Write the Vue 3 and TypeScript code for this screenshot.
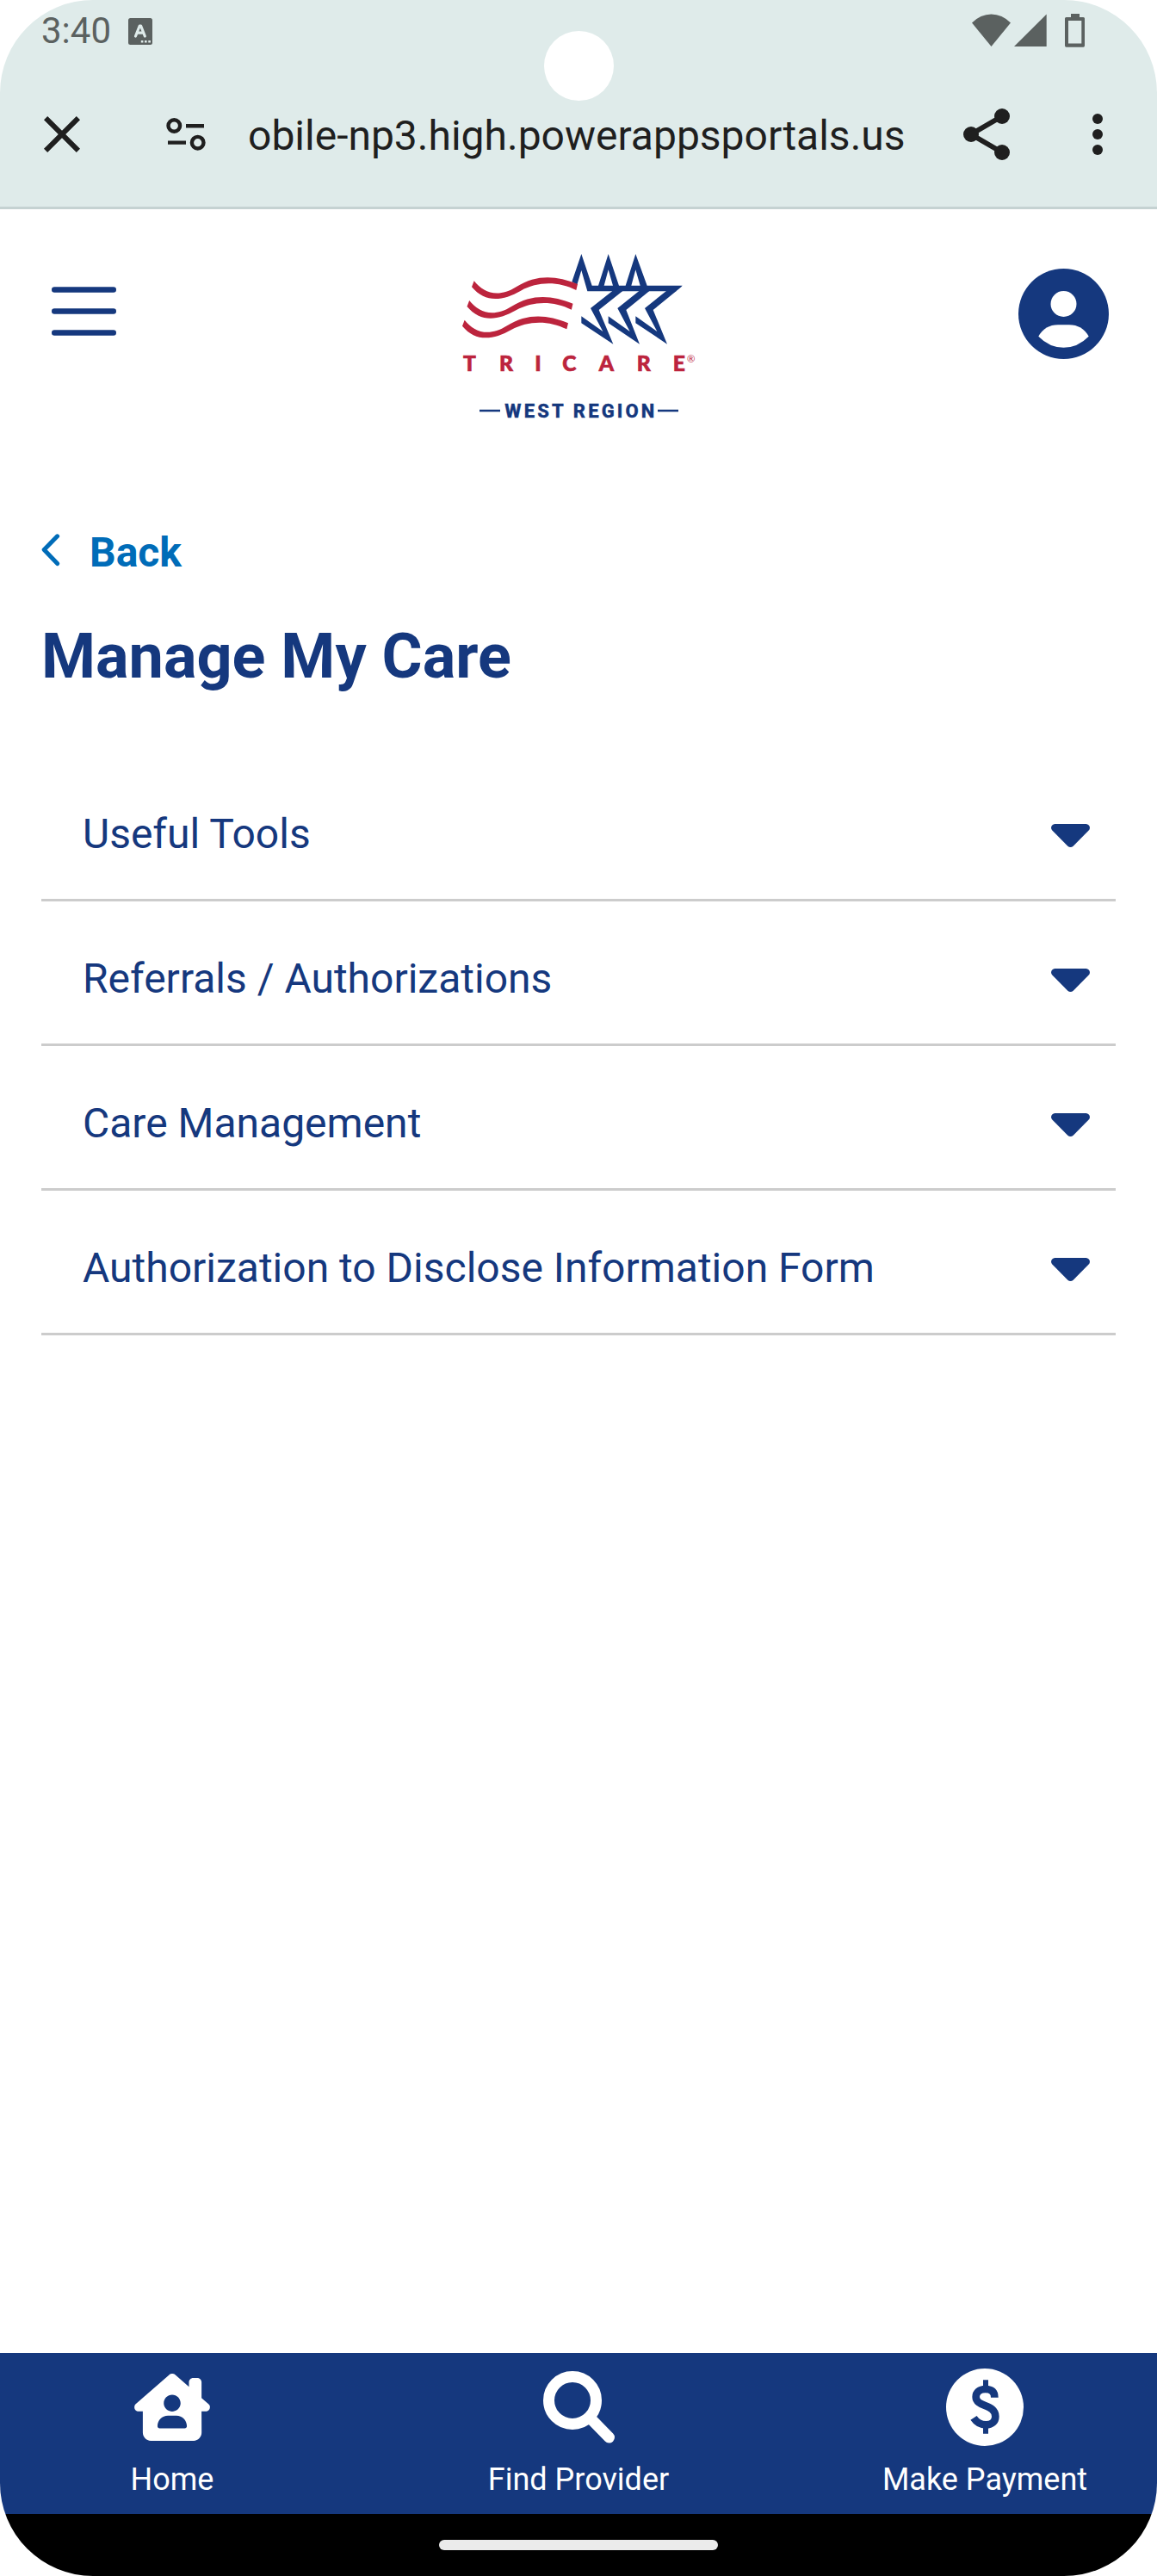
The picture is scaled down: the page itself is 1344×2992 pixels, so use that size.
<script setup lang="ts">
interface Section {
  id: string
  label: string
}

const sections: Section[] = [
  { id: 'tools', label: 'Useful Tools' },
  { id: 'referrals', label: 'Referrals / Authorizations' },
  { id: 'care', label: 'Care Management' },
  { id: 'disclose', label: 'Authorization to Disclose Information Form' },
]

// Offsets of the three logo stripes, top to bottom
const stripes: [number, number][] = [
  [0, 0],
  [-16.5, 68],
  [-33, 136],
]
</script>

<template>
  <div class="screen">
    <header class="chrome">
      <div class="status">
        <span class="clock">3:40</span>
        <svg class="keyboard" width="28" height="31" viewBox="0 0 28 31">
          <rect width="28" height="31" rx="2.5" fill="#5b6160" />
          <path d="M8.500 21 L13.200 9 H14.600 L19.300 21 M10.500 17.200 H17.300" fill="none" stroke="#dfebea" stroke-width="3.200" stroke-linecap="round" stroke-linejoin="round" />
          <path d="M14.800 26h2.600v2.400h-2.600zM19 26h2.600v2.400h-2.600zM23.300 26h2.600v2.400h-2.600z" fill="#dfebea" />
        </svg>
        <svg class="signals" width="132" height="40" viewBox="0 0 132 40">
          <g fill="#5b6160">
            <path d="M0 10.500 Q10 0.500 22.500 0.500 T45 10.500 L22.500 38 Z" />
            <path d="M49 38 L86.700 0.500 V38 Z" />
            <path fill-rule="evenodd" d="M115 0h10v4h4.500q1.500 0 1.500 1.500v31.500q0 1.700-1.500 1.700h-20q-1.500 0-1.500-1.700v-31.500q0-1.500 1.500-1.500h5.500zM112 8v26.500h15.300v-26.500z" />
          </g>
        </svg>
      </div>
      <div class="toolbar">
        <svg class="close" width="72" height="72" viewBox="0 0 24 24">
          <path d="M5.700 5.700L18.300 18.300M18.300 5.700L5.700 18.300" stroke="#1f1f1f" stroke-width="2" />
        </svg>
        <svg class="tune" width="46" height="40" viewBox="0 0 46 40" fill="none" stroke="#1f1f1f" stroke-width="4.400">
          <circle cx="9.300" cy="10" r="6.800" />
          <path d="M23 10.200H44M2 29.600H23" />
          <circle cx="36.700" cy="29.700" r="6.800" />
        </svg>
        <span class="url">obile-np3.high.powerappsportals.us</span>
        <svg class="share" width="72" height="72" viewBox="0 0 24 24" fill="#1f1f1f">
          <circle cx="18" cy="5" r="3" /><circle cx="6" cy="12" r="3" /><circle cx="18" cy="19" r="3" />
          <path d="M18 5L6 12L18 19" fill="none" stroke="#1f1f1f" stroke-width="2" />
        </svg>
        <svg class="more" width="72" height="72" viewBox="0 0 24 24" fill="#1f1f1f">
          <circle cx="12" cy="6" r="2" /><circle cx="12" cy="12" r="2" /><circle cx="12" cy="18" r="2" />
        </svg>
      </div>
      <div class="camera"></div>
    </header>

    <div class="brandbar">
      <svg class="menu" width="75" height="57" viewBox="0 0 75 57" fill="#15387e">
        <rect y="0.200" width="75" height="6.500" rx="3.200" />
        <rect y="25.200" width="75" height="6.500" rx="3.200" />
        <rect y="50.200" width="75" height="6.500" rx="3.200" />
      </svg>
      <svg class="logo" width="300" height="220" viewBox="0 0 900 660">
        <g fill="#15387e">
          <path d="M433 142L466 45L503 155H525L560 45L597 155H620L655 45L695 155H818L814 160L796 175H487L466 102L451 152ZM545 155H576L560 100ZM640 155H671L655 100Z" />
          <path d="M574 174L498 234L541 315L466 262V286L577 359L527 240L610 174Z" />
          <path d="M667 174L592 234L635 315L560 262V286L669 359L622 240L703 174Z" />
          <path d="M762 174L687 234L730 315L655 262V286L765 359L716 240L797 174Z" />
        </g>
        <path
          v-for="[dx, dy] in stripes"
          :key="dy"
          :transform="`translate(${dx} ${dy})`"
          fill="#bc243d"
          d="M92 139C125 180 175 200 240 159C310 115 380 120 453 150L448 171C385 140 315 140 255 173C190 210 130 215 84 160Z"
        />
        <text class="tricare" y="453" x="54 180 304 400 527 659 785">TRICARE</text>
        <text class="reg" x="834" y="424">®</text>
        <text class="region" x="199" y="615" textLength="522">WEST REGION</text>
        <path d="M111 591H183M732 591H804" stroke="#15387e" stroke-width="7" />
      </svg>
      <svg class="profile" width="105" height="105" viewBox="0 0 105 105">
        <circle cx="52.500" cy="52.500" r="52.500" fill="#15387e" />
        <circle cx="52.500" cy="41" r="15" fill="#fff" />
        <path d="M23.300 78.700Q31 65.300 46 65.300H59Q74 65.300 81.700 78.700Q69 91.700 52.500 91.700T23.300 78.700Z" fill="#fff" />
      </svg>
    </div>

    <main class="content">
      <a class="back">
        <svg width="22" height="38" viewBox="0 0 22 38">
          <path d="M18.600 2.800L3.200 18.600L18.600 34.600" fill="none" stroke="#006cb8" stroke-width="5" stroke-linecap="round" stroke-linejoin="round" />
        </svg>
        <span>Back</span>
      </a>
      <h1>Manage My Care</h1>
      <ul class="sections">
        <li v-for="s in sections" :key="s.id">
          <span>{{ s.label }}</span>
          <svg width="45" height="27" viewBox="0 0 45 27">
            <path d="M4.500 0H40.500C44.500 0 46.400 4.800 43.700 7.600L25.700 25.700C23.900 27.400 21.100 27.400 19.300 25.700L1.300 7.600C-1.400 4.800 .500 0 4.500 0Z" fill="#15387e" />
          </svg>
        </li>
      </ul>
    </main>

    <nav class="tabs">
      <a>
        <svg width="88" height="78" viewBox="0 0 576 512">
          <path fill="#fff" d="M575.800 255.500c0 18-15 32.100-32 32.100h-32l.7 160.200c.2 35.500-28.500 64.300-64 64.300H128.100c-35.300 0-64-28.700-64-64V287.600H32c-18 0-32-14-32-32.100c0-9 3-17 10-24L266.400 8c7-7 15-8 22-8s15 2 21 7L416 100.700V64c0-17.700 14.300-32 32-32h32c17.700 0 32 14.300 32 32V185l52.800 46.400c8 7 12 15 11 24zM352 224c0-35.300-28.700-64-64-64s-64 28.700-64 64s28.700 64 64 64s64-28.700 64-64zm-96 96c-44.200 0-80 35.800-80 80c0 8.800 7.200 16 16 16H384c8.800 0 16-7.200 16-16c0-44.200-35.800-80-80-80H256z" fill-rule="evenodd" />
        </svg>
        <span>Home</span>
      </a>
      <a>
        <svg width="84" height="84" viewBox="0 0 84 84" fill="none" stroke="#fff">
          <circle cx="35" cy="34" r="27.500" stroke-width="13" />
          <path d="M57 56L77.500 77" stroke-width="13" stroke-linecap="round" />
        </svg>
        <span>Find Provider</span>
      </a>
      <a>
        <svg width="90" height="90" viewBox="609 123 270 270" fill="none" stroke="#15387e">
          <circle cx="744" cy="258" r="135" fill="#fff" stroke="none" />
          <path d="M778 224C778 205 768 195 746 195C725 195 713 206 713 222C713 258 781 246 781 290C781 308 768 319 748 319C728 319 715 310 705 295" stroke-width="26" />
          <path d="M747 163V190M747 325V350" stroke-width="18" />
        </svg>
        <span>Make Payment</span>
      </a>
    </nav>
    <footer class="gesture"><i></i></footer>
  </div>
</template>

<style>
body {
  margin: 0;
  background: #fff;
}
</style>

<style scoped>
.screen {
  display: flex;
  flex-direction: column;
  width: 1344px;
  height: 2992px;
  overflow: hidden;
  border-radius: 108px;
  background: #fff;
  font-family: Roboto, 'Liberation Sans', sans-serif;
}
svg {
  display: block;
  flex: none;
}
.chrome {
  position: relative;
  box-sizing: border-box;
  height: 243px;
  background: #dfebea;
  border-bottom: 3px solid #c5d2d2;
}
.status {
  display: flex;
  align-items: flex-start;
  height: 120px;
  padding-left: 48px;
}
.clock {
  width: 101px;
  margin-top: 12px;
  font-size: 42px;
  line-height: 48px;
  color: #5b6160;
}
.keyboard {
  margin-top: 21px;
}
.signals {
  margin: 16px 0 0 952px;
}
.toolbar {
  display: flex;
  align-items: center;
  height: 72px;
  padding-left: 36px;
}
.tune {
  margin-left: 85px;
}
.url {
  width: 822px;
  margin-left: 49px;
  padding-top: 4px;
  font-size: 48px;
  line-height: 56px;
  color: #1f1f1f;
  white-space: nowrap;
}
.more {
  margin-left: 57px;
}
.camera {
  position: absolute;
  left: 631.500px;
  top: 35.500px;
  width: 81px;
  height: 81px;
  border-radius: 50%;
  background: #fff;
}
.brandbar {
  display: flex;
  align-items: flex-start;
  height: 371px;
}
.menu {
  margin: 90px 0 0 60px;
}
.logo {
  margin: 37px 0 0 385px;
}
.profile {
  margin: 69px 0 0 363px;
}
.tricare {
  font: 900 74px Lato, sans-serif;
  fill: #bc243d;
  stroke: #bc243d;
  stroke-width: 2px;
}
.reg {
  font: 400 34px Lato, sans-serif;
  fill: #bc243d;
}
.region {
  font: 800 66px Roboto, sans-serif;
  fill: #15387e;
  stroke: #15387e;
  stroke-width: 1px;
}
.content {
  flex: 1;
  padding: 0 48px;
}
.back {
  display: flex;
  align-items: center;
  gap: 34px;
  height: 56px;
  font-size: 48px;
  line-height: 56px;
  font-weight: 700;
  color: #006cb8;
}
.back svg {
  margin-bottom: 6px;
}
h1 {
  margin: 51px 0 74px;
  font-size: 72px;
  line-height: 84px;
  font-weight: 700;
  color: #15387e;
}
.sections {
  margin: 0;
  padding: 0;
  list-style: none;
}
li {
  box-sizing: border-box;
  display: flex;
  justify-content: space-between;
  align-items: center;
  height: 168px;
  padding: 18px 30px 0 48px;
  border-bottom: 3px solid #ccc;
  font-size: 48px;
  line-height: 56px;
  color: #15387e;
}
li span {
  margin-bottom: 4px;
}
.tabs {
  display: flex;
  justify-content: space-between;
  height: 187px;
  padding: 0 48px;
  background: #15387e;
}
.tabs a {
  display: flex;
  flex-direction: column;
  align-items: center;
  justify-content: space-between;
  width: 304px;
}
.tabs svg {
  margin: auto 0;
}
.tabs span {
  margin-bottom: 19px;
  font-size: 36px;
  line-height: 42px;
  color: #fff;
}
.gesture {
  display: flex;
  align-items: center;
  justify-content: center;
  height: 72px;
  background: #000;
}
.gesture i {
  width: 324px;
  height: 12px;
  border-radius: 6px;
  background: #ebebeb;
}
</style>
